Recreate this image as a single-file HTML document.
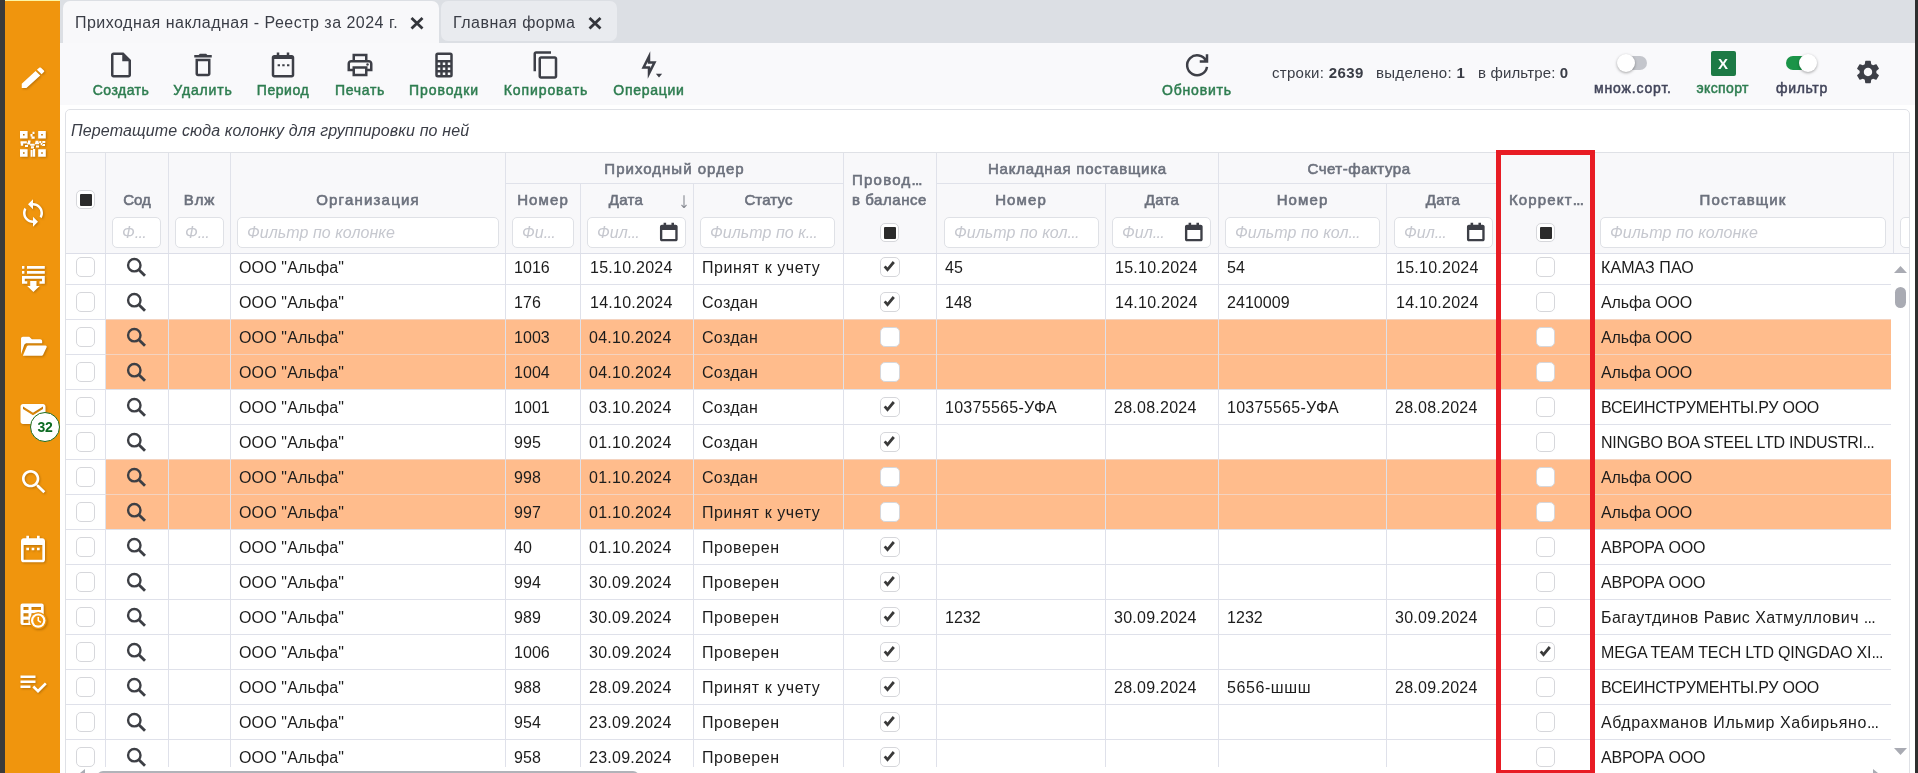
<!DOCTYPE html>
<html lang="ru">
<head>
<meta charset="utf-8">
<title>Приходная накладная - Реестр за 2024 г.</title>
<style>
*{box-sizing:border-box;margin:0;padding:0}
html,body{width:1918px;height:773px;overflow:hidden;background:#fff}
body{position:relative;font-family:"Liberation Sans",sans-serif;font-size:16px;color:#1c1c1c}
svg{display:block}
.abs{position:absolute}
/* side bar */
#dark{position:absolute;left:0;top:0;width:5px;height:773px;background:#3b3b3b}
#side{position:absolute;left:5px;top:0;width:55px;height:773px;background:#f0950d}
#side:before{content:"";position:absolute;left:0;top:0;width:55px;height:1px;background:#fdf6a4}
#side svg{position:absolute;left:11px;width:32px;height:32px;fill:#fff;filter:drop-shadow(1px 1px 1px rgba(120,70,0,.45))}
#badge{position:absolute;left:25px;top:412px;width:30px;height:30px;border-radius:50%;background:#fff;border:1.5px solid #1d6b1d;color:#0d6b22;font-weight:bold;font-size:14px;line-height:29px;text-align:center;letter-spacing:-.2px}
#rdark{position:absolute;left:1915px;top:0;width:3px;height:773px;background:#2e2e2e}
/* tabs */
#tabs{position:absolute;left:60px;top:0;width:1855px;height:43px;background:#dcdfe4}
.tab{position:absolute;top:1px;height:42px;border-radius:7px 7px 0 0;background:#f8f8fa;color:#3a3d46;font-size:16px;line-height:44px;white-space:nowrap}
.tab span{position:absolute;left:12px;top:0;letter-spacing:.48px}
.tab svg{position:absolute;top:14px;width:16px;height:16px;stroke:#34363c;stroke-width:2.800;fill:none}
#tab2{background:#e9ebef;height:40px;border-radius:7px}
/* toolbar */
#tb{position:absolute;left:60px;top:43px;width:1855px;height:62px;background:#f9f9fb}
.btn{position:absolute;top:0;height:62px;text-align:center}
.btn svg{position:absolute;top:7px;width:30px;height:30px;fill:#3d3f47}
.btn span{position:absolute;top:38px;left:-40px;right:-40px;font-weight:normal;-webkit-text-stroke:.5px;font-size:14px;line-height:18px;color:#2e7d50;white-space:nowrap}
.cnt{position:absolute;top:21px;font-size:15px;line-height:18px;color:#3a3d46;white-space:nowrap;letter-spacing:.3px}
.cnt b{letter-spacing:.4px}
.tgl{position:absolute;top:13px;width:22px;height:14px;border-radius:7px;background:#c4c6cc}
.tgl i{position:absolute;top:-2px;width:18px;height:18px;border-radius:50%;background:#fff;box-shadow:0 1px 3px rgba(0,0,0,.35)}
.lbl{position:absolute;top:36px;font-weight:normal;-webkit-text-stroke:.5px;font-size:14px;line-height:18px;color:#42455a;white-space:nowrap}
/* grid */
#grid{position:absolute;left:65px;top:109px;width:1845px;height:670px;border:1px solid #dfe1e6;border-radius:5px 5px 0 0;background:#fff;overflow:hidden}
#gp{position:absolute;left:0;top:0;width:1843px;height:42px;font-style:italic;font-size:16px;line-height:42px;color:#3a3d46;padding-left:5px;letter-spacing:.14px}
#hd{position:absolute;left:0;top:42px;width:1843px;height:102px;background:#f8f8fa;border-top:1px solid #dfe1e6;border-bottom:1px solid #dcdee8;z-index:3}
.hl1{position:absolute;width:1px;background:#e0e2ea}
.hl2{position:absolute;height:1px;background:#e0e2ea}
.ht{position:absolute;margin-top:-.3px;font-weight:normal;-webkit-text-stroke:.6px;font-size:15px;line-height:18px;color:#6c717d;text-align:center;white-space:nowrap;letter-spacing:.12px}
.fi{position:absolute;top:64px;height:31px;border:1px solid #dfe1e6;border-radius:5px;background:#fff;font-style:italic;font-size:16px;line-height:29px;color:#c6c8cf;padding-left:9px;white-space:nowrap;overflow:hidden;letter-spacing:.05px}
.fi svg{position:absolute;right:4.700px;top:2.500px;width:23.600px;height:22.200px;fill:#3d3f47}
#body{position:absolute;left:0;top:0;width:1843px;height:660px}
.row{position:absolute;left:0;width:1825px;height:35px}
.row .ln{position:absolute;left:0;top:0;width:1825px;height:1px;background:#dfe1ea}
.row .bg{position:absolute;left:40px;top:0;width:1785px;height:35px;background:#ffbc8c;border-top:1px solid #f4d3c0}
.c{position:absolute;top:2px;height:34px;line-height:34px;padding-left:9px;white-space:nowrap;overflow:hidden;color:#1c1c1c}
.sc{position:absolute;top:1px;height:34px}
.sr{position:absolute;left:21px;top:6px;width:22px;height:22px;stroke:#3d3f45}
.cb{position:absolute;width:19px;height:19px;border:1px solid #d6d7db;border-radius:5px;background:#fff}
.ck{position:absolute;left:0;top:0;width:17px;height:17px;stroke:#3a3a3a}
.vl{position:absolute;top:144px;width:1px;height:513px;background:#dfe1ea;z-index:2}
.row .cb{height:19.400px;width:19.300px}
.ind{position:absolute;left:2.500px;top:2.500px;width:12px;height:12px;background:#2b2b2b;border-radius:1px}
.el{font-style:inherit;letter-spacing:-.7px}
#grid,#tabs,#tb,#side{will-change:transform}
#red{position:absolute;left:1496px;top:150px;width:99px;height:625px;border:5px solid #e81c24;z-index:10}
</style>
</head>
<body>
<div id="dark"></div>
<div id="side">
<svg style="top:64.400px;left:13px;width:30px;height:27.500px" preserveAspectRatio="none" viewBox="0 0 24 24"><path d="M3 17.250V21h3.750L17.810 9.940l-3.750-3.750L3 17.250zM20.710 7.040c.39-.39.39-1.020 0-1.410l-2.340-2.340c-.39-.39-1.020-.39-1.410 0l-1.830 1.830 3.750 3.750 1.830-1.830z"/></svg>
<svg style="top:131px;left:15px;width:26px;height:26px" viewBox="0 0 26 26"><path fill-rule="evenodd" d="M0 0h7.600v7.600H0zM3 3v1.600h1.600V3zM18.200 0h7.600v7.600h-7.600zM21.200 3v1.600h1.600V3zM0 18.200h7.600v7.600H0zM3 21.200v1.600h1.600v-1.600zM18.200 18.200h7.600v7.600h-7.600zM21.200 21.200v1.600h1.600v-1.600zM12.500 .8h2v2.200h-2zM10.500 3h2v2.500h-2zM11.500 5.500h3.200v2.300h-3.200zM.5 10.300h6.300v2.200H.5zM8 9.500h2.500v2H8zM15.500 9.800h3v1.800h-3zM16 14.500h3v2h-3zM22 13h3v2h-3zM5 14h3v2H5zM.8 12.500h2.400v2.200H.8zM7.200 11.500h3v2h-3zM10.200 12.800h4.500v2h-4.500zM15 11.600h4.200v1.600H15zM19.300 10h2v2h-2zM22.300 10h3v2h-3zM20.600 12h2v2.200h-2zM11 15.200h3v2.300h-3zM10.600 19h2v6.800h-2zM13 18h2.200v7.800H13z"/></svg>
<svg style="top:198px;left:13.100px;width:30px;height:30px" viewBox="0 0 24 24"><path d="M12 4V1L8 5l4 4V6c3.310 0 6 2.690 6 6 0 1.010-.25 1.970-.7 2.800l1.460 1.460C19.540 15.030 20 13.570 20 12c0-4.420-3.580-8-8-8zm0 14c-3.310 0-6-2.690-6-6 0-1.010.25-1.970.7-2.800L5.240 7.740C4.460 8.970 4 10.430 4 12c0 4.420 3.580 8 8 8v3l4-4-4-4v3z"/></svg>
<svg style="top:266px;left:17px;width:23px;height:26px" viewBox="0 0 23 26"><path d="M0 0h2.400v2.800H0zM5 0h17.800v2.800H5zM0 5h2.400v2.800H0zM5 5h17.800v2.800H5zM0 10h22.800v7.800h-5.300v-2.600h2.500v-2.400H2.800v2.400h2.500v2.600H0zM8.200 15h6.300v5h3.200l-6.300 6-6.200-6h3z"/></svg>
<svg style="top:330.500px;left:13.200px;width:29px;height:29px" viewBox="0 0 24 24"><path d="M2.500 19.200V6.300c0-.9.7-1.600 1.600-1.600h5.200l2.200 2.200h6.900c.9 0 1.600.7 1.600 1.600v1.600H7.300c-.9 0-1.700.5-2.100 1.300L2.500 19.200zM4.100 20.200l3.300-7.500c.2-.5.700-.8 1.200-.8h14.100c.8 0 1.300.8 1 1.500l-2.900 6.200c-.3.500-.8.900-1.400.9H4.500c-.4 0-.6-.2-.4-.3z"/></svg>
<svg style="top:399px;left:12.800px;width:30px;height:30px" viewBox="0 0 24 24"><path d="M20 4H4c-1.100 0-1.990.9-1.990 2L2 18c0 1.100.9 2 2 2h16c1.100 0 2-.9 2-2V6c0-1.100-.9-2-2-2zm0 4l-8 5-8-5V6l8 5 8-5v2z"/></svg>
<svg style="top:466px;left:12.500px" viewBox="0 0 24 24"><path d="M15.500 14h-.79l-.28-.27C15.410 12.590 16 11.110 16 9.500 16 5.910 13.090 3 9.500 3S3 5.910 3 9.500 5.910 16 9.500 16c1.610 0 3.090-.59 4.230-1.570l.27.28v.79l5 4.990L20.490 19l-4.990-5zm-6 0C7.010 14 5 11.990 5 9.500S7.010 5 9.500 5 14 7.010 14 9.500 11.990 14 9.500 14z"/></svg>
<svg style="top:533px;left:12px" viewBox="0 0 24 24"><path d="M7 2h2v2h6V2h2v2h2c1.100 0 2 .9 2 2v14c0 1.100-.9 2-2 2H5c-1.100 0-2-.9-2-2V6c0-1.100.9-2 2-2h2V2zM5 9v11h14V9H5zm2 2h2v2H7zm4 0h2v2h-2zm4 0h2v2h-2z" fill-rule="evenodd"/></svg>
<svg style="top:603px;left:15px;width:27px;height:26px" viewBox="0 0 27 26"><path fill-rule="evenodd" d="M2.500 .5h19.200a2 2 0 012 2v17.500a2 2 0 01-2 2H2.500a2 2 0 01-2-2V2.500a2 2 0 012-2zM3.500 3.900v3.200h5V3.900zM11.500 3.900v3.200h9.500V3.900zM3.500 10.300v3.300h5v-3.300zM11.500 10.300v3.300h9.500v-3.300zM3.500 16.800v3.200h5v-3.200zM11.500 16.800v3.200h9.500v-3.200z"/><circle cx="18.200" cy="17.600" r="8.600" fill="#f0950d"/><circle cx="18.200" cy="17.600" r="7.200"/><circle cx="18.200" cy="17.600" r="5" fill="#f0950d"/><path d="M17.500 14h1.500v3.300l2.300 1.400-.8 1.200-3-1.900z"/></svg>
<svg style="top:668px;left:12.700px;width:30px;height:30px" viewBox="0 0 24 24"><path d="M14 10H2v2h12v-2zm0-4H2v2h12V6zM2 16h8v-2H2v2zm19.500-4.500L23 13l-6.990 7-4.510-4.500L13 14l3.010 3 5.490-5.500z"/></svg>
<div id="badge">32</div>
</div>
<div id="rdark"></div>
<div id="tabs">
<div class="tab" style="left:3px;width:376px"><span>Приходная накладная - Реестр за 2024 г.</span><svg style="left:346px" viewBox="0 0 16 16"><path d="M2.500 3l11 10.500M13.500 3l-11 10.500"/></svg></div>
<div class="tab" id="tab2" style="left:381px;width:176px"><span>Главная форма</span><svg style="left:146px" viewBox="0 0 16 16"><path d="M2.500 3l11 10.500M13.500 3l-11 10.500"/></svg></div>
</div>
<div id="tb">
<div class="btn" style="left:46px;width:30px"><svg viewBox="0 0 24 24"><path d="M14 2H6c-1.100 0-1.990.9-1.990 2L4 20c0 1.100.89 2 1.990 2H18c1.100 0 2-.9 2-2V8l-6-6zM6 20V4h7v5h5v11H6z"/></svg><span style="letter-spacing:0.48px">Создать</span></div>
<div class="btn" style="left:128px;width:30px"><svg viewBox="0 0 24 24"><path d="M6 19c0 1.100.9 2 2 2h8c1.100 0 2-.9 2-2V7H6v12zM8 9h8v10H8V9zm7.500-5l-1-1h-5l-1 1H5v2h14V4h-3.500z"/></svg><span style="letter-spacing:0.87px">Удалить</span></div>
<div class="btn" style="left:208px;width:30px"><svg viewBox="0 0 24 24"><path fill-rule="evenodd" d="M7 2h2v2h6V2h2v2h2c1.100 0 2 .9 2 2v14c0 1.100-.9 2-2 2H5c-1.100 0-2-.9-2-2V6c0-1.100.9-2 2-2h2V2zM5 7.200V20h14V7.200H5zm2.700 4.100h1.900V13H7.700zm3.700 0h1.900V13h-1.900zm3.800 0h1.900V13h-1.900z"/></svg><span style="letter-spacing:0.54px">Период</span></div>
<div class="btn" style="left:285px;width:30px"><svg viewBox="0 0 24 24"><path d="M19 8h-1V3H6v5H5c-1.660 0-3 1.340-3 3v6h4v4h12v-4h4v-6c0-1.660-1.340-3-3-3zM8 5h8v3H8V5zm8 12v2H8v-4h8v2zm2-2v-2H6v2H4v-4c0-.55.45-1 1-1h14c.55 0 1 .45 1 1v4h-2z"/><circle cx="18" cy="11.500" r="1"/></svg><span style="letter-spacing:0.72px">Печать</span></div>
<div class="btn" style="left:369px;width:30px"><svg viewBox="0 0 24 24"><path d="M7 2h10a2 2 0 012 2v16a2 2 0 01-2 2H7a2 2 0 01-2-2V4a2 2 0 012-2m0 2v4h10V4H7m0 6v2h2v-2H7m4 0v2h2v-2h-2m4 0v2h2v-2h-2m-8 4v2h2v-2H7m4 0v2h2v-2h-2m4 0v2h2v-2h-2m-8 4v2h2v-2H7m4 0v2h2v-2h-2m4 0v2h2v-2h-2z"/></svg><span style="letter-spacing:0.92px">Проводки</span></div>
<div class="btn" style="left:471px;width:30px"><svg viewBox="0 0 24 24"><path d="M16 1H4c-1.100 0-2 .9-2 2v14h2V3h12V1zm3 4H8c-1.100 0-2 .9-2 2v14c0 1.100.9 2 2 2h11c1.100 0 2-.9 2-2V7c0-1.100-.9-2-2-2zm0 16H8V7h11v14z"/></svg><span style="letter-spacing:0.9px">Копировать</span></div>
<div class="btn" style="left:574px;width:30px"><svg viewBox="0 0 24 24"><path d="M11 9.470V11h3.760L13 14.530V13H9.240L11 9.470M13 1L6 15h5v8l7-14h-5V1zM17.500 19h5L20 22z"/></svg><span style="letter-spacing:0.73px">Операции</span></div>
<div class="btn" style="left:1122px;width:30px"><svg viewBox="0 0 24 24" style="fill:none;stroke:#3d3f47;stroke-width:2"><path d="M19.300 8.700A8 8 0 1 0 20 13.500M20 3.300V9.200H14.200"/></svg><span style="letter-spacing:0.82px">Обновить</span></div>
<div class="cnt" style="left:1212px">строки: <b>2639</b></div>
<div class="cnt" style="left:1316px">выделено: <b>1</b></div>
<div class="cnt" style="left:1418px;letter-spacing:.15px">в фильтре: <b>0</b></div>
<div class="tgl" style="left:1565px"><i style="left:-8px"></i></div>
<div class="lbl" style="left:1534px;letter-spacing:0.84px">множ.сорт.</div>
<div class="abs" style="left:1650.500px;top:8px;width:25px;height:25px;background:#1d7a45;border-radius:2px;color:#fff;font-weight:bold;font-size:15px;line-height:25px;text-align:center">X</div>
<div class="lbl" style="left:1636.500px;color:#2e7d50;letter-spacing:0.39px">экспорт</div>
<div class="tgl" style="left:1726px;width:28px;background:#1b9448"><i style="left:12.500px"></i></div>
<div class="lbl" style="left:1716px;letter-spacing:0.66px">фильтр</div>
<svg class="abs" style="left:1794px;top:15px;width:28px;height:28px;fill:#3d3f47" viewBox="0 0 24 24"><path d="M19.140 12.940c.04-.3.06-.61.06-.94 0-.32-.02-.64-.07-.94l2.030-1.580c.18-.14.23-.41.12-.61l-1.920-3.320c-.12-.22-.37-.29-.59-.22l-2.390.96c-.5-.38-1.030-.7-1.620-.94l-.36-2.540c-.04-.24-.24-.41-.48-.41h-3.840c-.24 0-.43.17-.47.41l-.36 2.540c-.59.24-1.130.57-1.620.94l-2.390-.96c-.22-.08-.47 0-.59.220L2.740 8.870c-.12.21-.08.47.12.61l2.030 1.580c-.05.3-.09.630-.09.940s.02.64.07.94l-2.030 1.580c-.18.14-.23.41-.12.61l1.920 3.320c.12.22.37.29.59.22l2.390-.96c.5.38 1.030.7 1.620.94l.36 2.540c.05.24.24.41.48.41h3.840c.24 0 .44-.17.47-.41l.36-2.540c.59-.24 1.130-.56 1.620-.94l2.390.96c.22.08.47 0 .59-.22l1.920-3.320c.12-.22.07-.47-.12-.61l-2.010-1.580zM12 15.600c-1.980 0-3.600-1.620-3.600-3.600s1.620-3.600 3.600-3.600 3.600 1.620 3.600 3.600-1.620 3.600-3.600 3.600z"/></svg>
</div>
<div id="grid">
<div id="gp">Перетащите сюда колонку для группировки по ней</div>
<div id="body" style="top:-110px">
<div class="row" style="top:249px">
<b class="ln"></b>
<i class="cb " style="left:10.2px;top:8.3px"></i>
<span class="sc" style="left:39px;width:63px"><svg class="sr" viewBox="0 0 22 22"><circle cx="8.300" cy="9.200" r="6.200" fill="none" stroke-width="2.400"/><path d="M12.600 13.500L19 19.700" stroke-width="2.900" fill="none"/></svg></span>
<span class="c" style="left:164px;width:275px;letter-spacing:0.14px">ООО "Альфа"</span>
<span class="c" style="left:439px;width:75px;letter-spacing:0.05px">1016</span>
<span class="c" style="left:515px;width:113px;letter-spacing:0.25px">15.10.2024</span>
<span class="c" style="left:627px;width:150px;letter-spacing:0.58px">Принят к учету</span>
<i class="cb " style="left:814.3px;top:8.3px"><svg class="ck" viewBox="0 0 17 17"><path d="M3.700 8.400L6.500 11.600 12.800 4" fill="none" stroke-width="2.800"/></svg></i>
<span class="c" style="left:870px;width:169px;letter-spacing:0.05px">45</span>
<span class="c" style="left:1040px;width:113px;letter-spacing:0.25px">15.10.2024</span>
<span class="c" style="left:1152px;width:168px;letter-spacing:0.05px">54</span>
<span class="c" style="left:1321px;width:113px;letter-spacing:0.25px">15.10.2024</span>
<i class="cb " style="left:1470.2px;top:8.3px"></i>
<span class="c" style="left:1526px;width:301px;letter-spacing:0.07px">КАМАЗ ПАО</span>
</div>
<div class="row" style="top:284px">
<b class="ln"></b>
<i class="cb " style="left:10.2px;top:8.3px"></i>
<span class="sc" style="left:39px;width:63px"><svg class="sr" viewBox="0 0 22 22"><circle cx="8.300" cy="9.200" r="6.200" fill="none" stroke-width="2.400"/><path d="M12.600 13.500L19 19.700" stroke-width="2.900" fill="none"/></svg></span>
<span class="c" style="left:164px;width:275px;letter-spacing:0.14px">ООО "Альфа"</span>
<span class="c" style="left:439px;width:75px;letter-spacing:0.05px">176</span>
<span class="c" style="left:515px;width:113px;letter-spacing:0.25px">14.10.2024</span>
<span class="c" style="left:627px;width:150px;letter-spacing:0.31px">Создан</span>
<i class="cb " style="left:814.3px;top:8.3px"><svg class="ck" viewBox="0 0 17 17"><path d="M3.700 8.400L6.500 11.600 12.800 4" fill="none" stroke-width="2.800"/></svg></i>
<span class="c" style="left:870px;width:169px;letter-spacing:0.05px">148</span>
<span class="c" style="left:1040px;width:113px;letter-spacing:0.25px">14.10.2024</span>
<span class="c" style="left:1152px;width:168px;letter-spacing:0.05px">2410009</span>
<span class="c" style="left:1321px;width:113px;letter-spacing:0.25px">14.10.2024</span>
<i class="cb " style="left:1470.2px;top:8.3px"></i>
<span class="c" style="left:1526px;width:301px;letter-spacing:-0.11px">Альфа ООО</span>
</div>
<div class="row hl" style="top:319px">
<b class="ln"></b>
<b class="bg"></b>
<i class="cb " style="left:10.2px;top:8.3px"></i>
<span class="sc" style="left:39px;width:63px"><svg class="sr" viewBox="0 0 22 22"><circle cx="8.300" cy="9.200" r="6.200" fill="none" stroke-width="2.400"/><path d="M12.600 13.500L19 19.700" stroke-width="2.900" fill="none"/></svg></span>
<span class="c" style="left:164px;width:275px;letter-spacing:0.14px">ООО "Альфа"</span>
<span class="c" style="left:439px;width:75px;letter-spacing:0.05px">1003</span>
<span class="c" style="left:514px;width:113px;letter-spacing:0.25px">04.10.2024</span>
<span class="c" style="left:627px;width:150px;letter-spacing:0.31px">Создан</span>
<i class="cb " style="left:814.3px;top:8.3px"></i>
<i class="cb " style="left:1470.2px;top:8.3px"></i>
<span class="c" style="left:1526px;width:301px;letter-spacing:-0.11px">Альфа ООО</span>
</div>
<div class="row hl" style="top:354px">
<b class="ln"></b>
<b class="bg"></b>
<i class="cb " style="left:10.2px;top:8.3px"></i>
<span class="sc" style="left:39px;width:63px"><svg class="sr" viewBox="0 0 22 22"><circle cx="8.300" cy="9.200" r="6.200" fill="none" stroke-width="2.400"/><path d="M12.600 13.500L19 19.700" stroke-width="2.900" fill="none"/></svg></span>
<span class="c" style="left:164px;width:275px;letter-spacing:0.14px">ООО "Альфа"</span>
<span class="c" style="left:439px;width:75px;letter-spacing:0.05px">1004</span>
<span class="c" style="left:514px;width:113px;letter-spacing:0.25px">04.10.2024</span>
<span class="c" style="left:627px;width:150px;letter-spacing:0.31px">Создан</span>
<i class="cb " style="left:814.3px;top:8.3px"></i>
<i class="cb " style="left:1470.2px;top:8.3px"></i>
<span class="c" style="left:1526px;width:301px;letter-spacing:-0.11px">Альфа ООО</span>
</div>
<div class="row" style="top:389px">
<b class="ln"></b>
<i class="cb " style="left:10.2px;top:8.3px"></i>
<span class="sc" style="left:39px;width:63px"><svg class="sr" viewBox="0 0 22 22"><circle cx="8.300" cy="9.200" r="6.200" fill="none" stroke-width="2.400"/><path d="M12.600 13.500L19 19.700" stroke-width="2.900" fill="none"/></svg></span>
<span class="c" style="left:164px;width:275px;letter-spacing:0.14px">ООО "Альфа"</span>
<span class="c" style="left:439px;width:75px;letter-spacing:0.05px">1001</span>
<span class="c" style="left:514px;width:113px;letter-spacing:0.25px">03.10.2024</span>
<span class="c" style="left:627px;width:150px;letter-spacing:0.31px">Создан</span>
<i class="cb " style="left:814.3px;top:8.3px"><svg class="ck" viewBox="0 0 17 17"><path d="M3.700 8.400L6.500 11.600 12.800 4" fill="none" stroke-width="2.800"/></svg></i>
<span class="c" style="left:870px;width:169px;letter-spacing:0.28px">10375565-УФА</span>
<span class="c" style="left:1039px;width:113px;letter-spacing:0.25px">28.08.2024</span>
<span class="c" style="left:1152px;width:168px;letter-spacing:0.28px">10375565-УФА</span>
<span class="c" style="left:1320px;width:113px;letter-spacing:0.25px">28.08.2024</span>
<i class="cb " style="left:1470.2px;top:8.3px"></i>
<span class="c" style="left:1526px;width:301px;letter-spacing:-0.23px">ВСЕИНСТРУМЕНТЫ.РУ ООО</span>
</div>
<div class="row" style="top:424px">
<b class="ln"></b>
<i class="cb " style="left:10.2px;top:8.3px"></i>
<span class="sc" style="left:39px;width:63px"><svg class="sr" viewBox="0 0 22 22"><circle cx="8.300" cy="9.200" r="6.200" fill="none" stroke-width="2.400"/><path d="M12.600 13.500L19 19.700" stroke-width="2.900" fill="none"/></svg></span>
<span class="c" style="left:164px;width:275px;letter-spacing:0.14px">ООО "Альфа"</span>
<span class="c" style="left:439px;width:75px;letter-spacing:0.05px">995</span>
<span class="c" style="left:514px;width:113px;letter-spacing:0.25px">01.10.2024</span>
<span class="c" style="left:627px;width:150px;letter-spacing:0.31px">Создан</span>
<i class="cb " style="left:814.3px;top:8.3px"><svg class="ck" viewBox="0 0 17 17"><path d="M3.700 8.400L6.500 11.600 12.800 4" fill="none" stroke-width="2.800"/></svg></i>
<i class="cb " style="left:1470.2px;top:8.3px"></i>
<span class="c" style="left:1526px;width:301px;letter-spacing:-0.23px">NINGBO BOA STEEL LTD INDUSTRI<i class="el">...</i></span>
</div>
<div class="row hl" style="top:459px">
<b class="ln"></b>
<b class="bg"></b>
<i class="cb " style="left:10.2px;top:8.3px"></i>
<span class="sc" style="left:39px;width:63px"><svg class="sr" viewBox="0 0 22 22"><circle cx="8.300" cy="9.200" r="6.200" fill="none" stroke-width="2.400"/><path d="M12.600 13.500L19 19.700" stroke-width="2.900" fill="none"/></svg></span>
<span class="c" style="left:164px;width:275px;letter-spacing:0.14px">ООО "Альфа"</span>
<span class="c" style="left:439px;width:75px;letter-spacing:0.05px">998</span>
<span class="c" style="left:514px;width:113px;letter-spacing:0.25px">01.10.2024</span>
<span class="c" style="left:627px;width:150px;letter-spacing:0.31px">Создан</span>
<i class="cb " style="left:814.3px;top:8.3px"></i>
<i class="cb " style="left:1470.2px;top:8.3px"></i>
<span class="c" style="left:1526px;width:301px;letter-spacing:-0.11px">Альфа ООО</span>
</div>
<div class="row hl" style="top:494px">
<b class="ln"></b>
<b class="bg"></b>
<i class="cb " style="left:10.2px;top:8.3px"></i>
<span class="sc" style="left:39px;width:63px"><svg class="sr" viewBox="0 0 22 22"><circle cx="8.300" cy="9.200" r="6.200" fill="none" stroke-width="2.400"/><path d="M12.600 13.500L19 19.700" stroke-width="2.900" fill="none"/></svg></span>
<span class="c" style="left:164px;width:275px;letter-spacing:0.14px">ООО "Альфа"</span>
<span class="c" style="left:439px;width:75px;letter-spacing:0.05px">997</span>
<span class="c" style="left:514px;width:113px;letter-spacing:0.25px">01.10.2024</span>
<span class="c" style="left:627px;width:150px;letter-spacing:0.58px">Принят к учету</span>
<i class="cb " style="left:814.3px;top:8.3px"></i>
<i class="cb " style="left:1470.2px;top:8.3px"></i>
<span class="c" style="left:1526px;width:301px;letter-spacing:-0.11px">Альфа ООО</span>
</div>
<div class="row" style="top:529px">
<b class="ln"></b>
<i class="cb " style="left:10.2px;top:8.3px"></i>
<span class="sc" style="left:39px;width:63px"><svg class="sr" viewBox="0 0 22 22"><circle cx="8.300" cy="9.200" r="6.200" fill="none" stroke-width="2.400"/><path d="M12.600 13.500L19 19.700" stroke-width="2.900" fill="none"/></svg></span>
<span class="c" style="left:164px;width:275px;letter-spacing:0.14px">ООО "Альфа"</span>
<span class="c" style="left:439px;width:75px;letter-spacing:0.05px">40</span>
<span class="c" style="left:514px;width:113px;letter-spacing:0.25px">01.10.2024</span>
<span class="c" style="left:627px;width:150px;letter-spacing:0.57px">Проверен</span>
<i class="cb " style="left:814.3px;top:8.3px"><svg class="ck" viewBox="0 0 17 17"><path d="M3.700 8.400L6.500 11.600 12.800 4" fill="none" stroke-width="2.800"/></svg></i>
<i class="cb " style="left:1470.2px;top:8.3px"></i>
<span class="c" style="left:1526px;width:301px;letter-spacing:-0.2px">АВРОРА ООО</span>
</div>
<div class="row" style="top:564px">
<b class="ln"></b>
<i class="cb " style="left:10.2px;top:8.3px"></i>
<span class="sc" style="left:39px;width:63px"><svg class="sr" viewBox="0 0 22 22"><circle cx="8.300" cy="9.200" r="6.200" fill="none" stroke-width="2.400"/><path d="M12.600 13.500L19 19.700" stroke-width="2.900" fill="none"/></svg></span>
<span class="c" style="left:164px;width:275px;letter-spacing:0.14px">ООО "Альфа"</span>
<span class="c" style="left:439px;width:75px;letter-spacing:0.05px">994</span>
<span class="c" style="left:514px;width:113px;letter-spacing:0.25px">30.09.2024</span>
<span class="c" style="left:627px;width:150px;letter-spacing:0.57px">Проверен</span>
<i class="cb " style="left:814.3px;top:8.3px"><svg class="ck" viewBox="0 0 17 17"><path d="M3.700 8.400L6.500 11.600 12.800 4" fill="none" stroke-width="2.800"/></svg></i>
<i class="cb " style="left:1470.2px;top:8.3px"></i>
<span class="c" style="left:1526px;width:301px;letter-spacing:-0.2px">АВРОРА ООО</span>
</div>
<div class="row" style="top:599px">
<b class="ln"></b>
<i class="cb " style="left:10.2px;top:8.3px"></i>
<span class="sc" style="left:39px;width:63px"><svg class="sr" viewBox="0 0 22 22"><circle cx="8.300" cy="9.200" r="6.200" fill="none" stroke-width="2.400"/><path d="M12.600 13.500L19 19.700" stroke-width="2.900" fill="none"/></svg></span>
<span class="c" style="left:164px;width:275px;letter-spacing:0.14px">ООО "Альфа"</span>
<span class="c" style="left:439px;width:75px;letter-spacing:0.05px">989</span>
<span class="c" style="left:514px;width:113px;letter-spacing:0.25px">30.09.2024</span>
<span class="c" style="left:627px;width:150px;letter-spacing:0.57px">Проверен</span>
<i class="cb " style="left:814.3px;top:8.3px"><svg class="ck" viewBox="0 0 17 17"><path d="M3.700 8.400L6.500 11.600 12.800 4" fill="none" stroke-width="2.800"/></svg></i>
<span class="c" style="left:870px;width:169px;letter-spacing:0.05px">1232</span>
<span class="c" style="left:1039px;width:113px;letter-spacing:0.25px">30.09.2024</span>
<span class="c" style="left:1152px;width:168px;letter-spacing:0.05px">1232</span>
<span class="c" style="left:1320px;width:113px;letter-spacing:0.25px">30.09.2024</span>
<i class="cb " style="left:1470.2px;top:8.3px"></i>
<span class="c" style="left:1526px;width:301px;letter-spacing:0.44px">Багаутдинов Равис Хатмуллович <i class="el">...</i></span>
</div>
<div class="row" style="top:634px">
<b class="ln"></b>
<i class="cb " style="left:10.2px;top:8.3px"></i>
<span class="sc" style="left:39px;width:63px"><svg class="sr" viewBox="0 0 22 22"><circle cx="8.300" cy="9.200" r="6.200" fill="none" stroke-width="2.400"/><path d="M12.600 13.500L19 19.700" stroke-width="2.900" fill="none"/></svg></span>
<span class="c" style="left:164px;width:275px;letter-spacing:0.14px">ООО "Альфа"</span>
<span class="c" style="left:439px;width:75px;letter-spacing:0.05px">1006</span>
<span class="c" style="left:514px;width:113px;letter-spacing:0.25px">30.09.2024</span>
<span class="c" style="left:627px;width:150px;letter-spacing:0.57px">Проверен</span>
<i class="cb " style="left:814.3px;top:8.3px"><svg class="ck" viewBox="0 0 17 17"><path d="M3.700 8.400L6.500 11.600 12.800 4" fill="none" stroke-width="2.800"/></svg></i>
<i class="cb " style="left:1470.2px;top:8.3px"><svg class="ck" viewBox="0 0 17 17"><path d="M3.700 8.400L6.500 11.600 12.800 4" fill="none" stroke-width="2.800"/></svg></i>
<span class="c" style="left:1526px;width:301px;letter-spacing:-0.18px">MEGA TEAM TECH LTD QINGDAO XI<i class="el">...</i></span>
</div>
<div class="row" style="top:669px">
<b class="ln"></b>
<i class="cb " style="left:10.2px;top:8.3px"></i>
<span class="sc" style="left:39px;width:63px"><svg class="sr" viewBox="0 0 22 22"><circle cx="8.300" cy="9.200" r="6.200" fill="none" stroke-width="2.400"/><path d="M12.600 13.500L19 19.700" stroke-width="2.900" fill="none"/></svg></span>
<span class="c" style="left:164px;width:275px;letter-spacing:0.14px">ООО "Альфа"</span>
<span class="c" style="left:439px;width:75px;letter-spacing:0.05px">988</span>
<span class="c" style="left:514px;width:113px;letter-spacing:0.25px">28.09.2024</span>
<span class="c" style="left:627px;width:150px;letter-spacing:0.58px">Принят к учету</span>
<i class="cb " style="left:814.3px;top:8.3px"><svg class="ck" viewBox="0 0 17 17"><path d="M3.700 8.400L6.500 11.600 12.800 4" fill="none" stroke-width="2.800"/></svg></i>
<span class="c" style="left:1039px;width:113px;letter-spacing:0.25px">28.09.2024</span>
<span class="c" style="left:1152px;width:168px;letter-spacing:0.58px">5656-шшш</span>
<span class="c" style="left:1320px;width:113px;letter-spacing:0.25px">28.09.2024</span>
<i class="cb " style="left:1470.2px;top:8.3px"></i>
<span class="c" style="left:1526px;width:301px;letter-spacing:-0.23px">ВСЕИНСТРУМЕНТЫ.РУ ООО</span>
</div>
<div class="row" style="top:704px">
<b class="ln"></b>
<i class="cb " style="left:10.2px;top:8.3px"></i>
<span class="sc" style="left:39px;width:63px"><svg class="sr" viewBox="0 0 22 22"><circle cx="8.300" cy="9.200" r="6.200" fill="none" stroke-width="2.400"/><path d="M12.600 13.500L19 19.700" stroke-width="2.900" fill="none"/></svg></span>
<span class="c" style="left:164px;width:275px;letter-spacing:0.14px">ООО "Альфа"</span>
<span class="c" style="left:439px;width:75px;letter-spacing:0.05px">954</span>
<span class="c" style="left:514px;width:113px;letter-spacing:0.25px">23.09.2024</span>
<span class="c" style="left:627px;width:150px;letter-spacing:0.57px">Проверен</span>
<i class="cb " style="left:814.3px;top:8.3px"><svg class="ck" viewBox="0 0 17 17"><path d="M3.700 8.400L6.500 11.600 12.800 4" fill="none" stroke-width="2.800"/></svg></i>
<i class="cb " style="left:1470.2px;top:8.3px"></i>
<span class="c" style="left:1526px;width:301px;letter-spacing:0.62px">Абдрахманов Ильмир Хабирьяно<i class="el">...</i></span>
</div>
<div class="row" style="top:739px">
<b class="ln"></b>
<i class="cb " style="left:10.2px;top:8.3px"></i>
<span class="sc" style="left:39px;width:63px"><svg class="sr" viewBox="0 0 22 22"><circle cx="8.300" cy="9.200" r="6.200" fill="none" stroke-width="2.400"/><path d="M12.600 13.500L19 19.700" stroke-width="2.900" fill="none"/></svg></span>
<span class="c" style="left:164px;width:275px;letter-spacing:0.14px">ООО "Альфа"</span>
<span class="c" style="left:439px;width:75px;letter-spacing:0.05px">958</span>
<span class="c" style="left:514px;width:113px;letter-spacing:0.25px">23.09.2024</span>
<span class="c" style="left:627px;width:150px;letter-spacing:0.57px">Проверен</span>
<i class="cb " style="left:814.3px;top:8.3px"><svg class="ck" viewBox="0 0 17 17"><path d="M3.700 8.400L6.500 11.600 12.800 4" fill="none" stroke-width="2.800"/></svg></i>
<i class="cb " style="left:1470.2px;top:8.3px"></i>
<span class="c" style="left:1526px;width:301px;letter-spacing:-0.2px">АВРОРА ООО</span>
</div>
</div>
<b class="vl" style="left:39px"></b><b class="vl" style="left:102px"></b><b class="vl" style="left:164px"></b><b class="vl" style="left:439px"></b><b class="vl" style="left:514px"></b><b class="vl" style="left:627px"></b><b class="vl" style="left:777px"></b><b class="vl" style="left:870px"></b><b class="vl" style="left:1039px"></b><b class="vl" style="left:1152px"></b><b class="vl" style="left:1320px"></b><b class="vl" style="left:1433px"></b><b class="vl" style="left:1526px"></b>
<div id="hd">
<b class="hl1" style="left:39px;top:0px;height:100px"></b>
<b class="hl1" style="left:102px;top:0px;height:100px"></b>
<b class="hl1" style="left:164px;top:0px;height:100px"></b>
<b class="hl1" style="left:439px;top:0px;height:100px"></b>
<b class="hl1" style="left:777px;top:0px;height:100px"></b>
<b class="hl1" style="left:870px;top:0px;height:100px"></b>
<b class="hl1" style="left:1152px;top:0px;height:100px"></b>
<b class="hl1" style="left:1433px;top:0px;height:100px"></b>
<b class="hl1" style="left:1526px;top:0px;height:100px"></b>
<b class="hl1" style="left:1827px;top:0px;height:100px"></b>
<b class="hl1" style="left:514px;top:31px;height:69px"></b>
<b class="hl1" style="left:627px;top:31px;height:69px"></b>
<b class="hl1" style="left:1039px;top:31px;height:69px"></b>
<b class="hl1" style="left:1320px;top:31px;height:69px"></b>
<b class="hl2" style="left:440px;top:30px;width:337px"></b>
<b class="hl2" style="left:871px;top:30px;width:562px"></b>
<div class="ht" style="left:40px;width:62px;top:38px;letter-spacing:-0.09px">Сод</div>
<div class="ht" style="left:103px;width:61px;top:38px;letter-spacing:0.91px">Влж</div>
<div class="ht" style="left:165px;width:274px;top:38px;letter-spacing:1.2px">Организация</div>
<div class="ht" style="left:440px;width:337px;top:7px;letter-spacing:1.02px">Приходный ордер</div>
<div class="ht" style="left:440px;width:74px;top:38px;letter-spacing:1.1px">Номер</div>
<div class="ht" style="left:514px;width:92px;top:38px;letter-spacing:0.28px">Дата</div>
<svg class="abs" style="left:614.7px;top:41.6px;width:6px;height:13.500px;stroke:#878a92;stroke-width:1.100;fill:none" viewBox="0 0 6 13.500"><path d="M3 .3V12.600M.5 9.800L3 12.800 5.500 9.800"/></svg>
<div class="ht" style="left:628px;width:149px;top:38px;letter-spacing:0.12px">Статус</div>
<div class="ht" style="left:786px;width:84px;top:18px;letter-spacing:1.23px;text-align:left">Провод<i class="el">...</i></div>
<div class="ht" style="left:786px;width:88px;top:38px;letter-spacing:0.56px;text-align:left">в балансе</div>
<div class="ht" style="left:871px;width:281px;top:7px;letter-spacing:0.77px">Накладная поставщика</div>
<div class="ht" style="left:871px;width:168px;top:38px;letter-spacing:1.1px">Номер</div>
<div class="ht" style="left:1040px;width:112px;top:38px;letter-spacing:0.28px">Дата</div>
<div class="ht" style="left:1153px;width:280px;top:7px;letter-spacing:0.54px">Счет-фактура</div>
<div class="ht" style="left:1153px;width:167px;top:38px;letter-spacing:1.1px">Номер</div>
<div class="ht" style="left:1321px;width:112px;top:38px;letter-spacing:0.28px">Дата</div>
<div class="ht" style="left:1434px;width:92px;top:38px;letter-spacing:1.16px">Коррект<i class="el">...</i></div>
<div class="ht" style="left:1527px;width:300px;top:38px;letter-spacing:1.1px">Поставщик</div>
<div class="fi" style="left:46px;width:49px">Ф<i class="el">...</i></div>
<div class="fi" style="left:109px;width:49px">Ф<i class="el">...</i></div>
<div class="fi" style="left:171px;width:262px">Фильтр по колонке</div>
<div class="fi" style="left:446px;width:62px">Фи<i class="el">...</i></div>
<div class="fi" style="left:521px;width:99px">Фил<i class="el">...</i><svg viewBox="0 0 24 24" preserveAspectRatio="none"><path fill-rule="evenodd" d="M6.700 2h2.600v2h5.400V2h2.600v2H19c1.100 0 2 .9 2 2v14c0 1.100-.9 2-2 2H5c-1.100 0-2-.9-2-2V6c0-1.100.9-2 2-2h1.700V2zM5.400 9.800v9.800h13.200V9.800H5.400z"/></svg></div>
<div class="fi" style="left:634px;width:135px">Фильтр по к<i class="el">...</i></div>
<div class="fi" style="left:878px;width:155px">Фильтр по кол<i class="el">...</i></div>
<div class="fi" style="left:1046px;width:99px">Фил<i class="el">...</i><svg viewBox="0 0 24 24" preserveAspectRatio="none"><path fill-rule="evenodd" d="M6.700 2h2.600v2h5.400V2h2.600v2H19c1.100 0 2 .9 2 2v14c0 1.100-.9 2-2 2H5c-1.100 0-2-.9-2-2V6c0-1.100.9-2 2-2h1.700V2zM5.400 9.800v9.800h13.200V9.800H5.400z"/></svg></div>
<div class="fi" style="left:1159px;width:155px">Фильтр по кол<i class="el">...</i></div>
<div class="fi" style="left:1328px;width:99px">Фил<i class="el">...</i><svg viewBox="0 0 24 24" preserveAspectRatio="none"><path fill-rule="evenodd" d="M6.700 2h2.600v2h5.400V2h2.600v2H19c1.100 0 2 .9 2 2v14c0 1.100-.9 2-2 2H5c-1.100 0-2-.9-2-2V6c0-1.100.9-2 2-2h1.700V2zM5.400 9.800v9.800h13.200V9.800H5.400z"/></svg></div>
<div class="fi" style="left:1534px;width:286px">Фильтр по колонке</div>
<div class="fi" style="left:1834px;width:50px"></div>
<i class="cb" style="left:10px;top:37px"><b class="ind"></b></i>
<i class="cb" style="left:814px;top:70px"><b class="ind"></b></i>
<i class="cb" style="left:1470px;top:70px"><b class="ind"></b></i>
</div>
<div id="vs">
<svg class="abs" style="left:1828px;top:156px;width:13px;height:7px;fill:#a9abb3" viewBox="0 0 13 7"><path d="M0 7L6.500 0 13 7z"/></svg>
<div class="abs" style="left:1829px;top:177px;width:11px;height:21px;border-radius:6px;background:#a9abb3"></div>
<svg class="abs" style="left:1828px;top:638px;width:13px;height:7px;fill:#a9abb3" viewBox="0 0 13 7"><path d="M0 0L6.500 7 13 0z"/></svg>
</div>
<div id="hs" class="abs" style="left:0;top:657px;width:1843px;height:8px;background:#fff;z-index:4">
<svg class="abs" style="left:14px;top:2px;width:5px;height:6px;fill:#a9abb3" viewBox="0 0 5 6"><path d="M5 0L0 4 5 8z"/></svg>
<div class="abs" style="left:31px;top:4px;width:542px;height:12px;border-radius:6px;background:#b1b3b9"></div>
<svg class="abs" style="left:1807px;top:2px;width:5px;height:6px;fill:#a9abb3" viewBox="0 0 5 6"><path d="M0 0L5 4 0 8z"/></svg>
</div>
</div>
<div id="red"></div>
</body>
</html>
